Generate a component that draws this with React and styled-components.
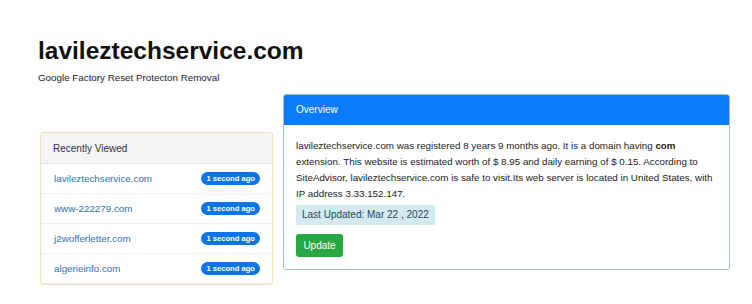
import React from "react";
import styled, { createGlobalStyle } from "styled-components";

const Global = createGlobalStyle`
  html, body { margin: 0; padding: 0; background: #fff; }
  body { font-family: "Liberation Sans", Arial, sans-serif; color: #212529; }
`;

const Page = styled.div`
  width: 752px;
  height: 304px;
  overflow: hidden;
  padding: 36px 0 0 38px;
  box-sizing: border-box;
`;

const Title = styled.h1`
  margin: 0;
  font-size: 24.5px;
  font-weight: 700;
  line-height: 30px;
  color: #111;
`;

const Subtitle = styled.p`
  margin: 5px 0 0;
  font-size: 9.8px;
  line-height: 14px;
  color: #222;
`;

const Columns = styled.div`
  display: flex;
  align-items: flex-start;
  gap: 10px;
  margin-top: 9px;
  padding-left: 2px;
`;

const Card = styled.div`
  background: #fff;
  border: 1px solid ${(p) => p.$border};
  border-radius: 3px;
  box-sizing: border-box;
  width: ${(p) => p.$w}px;
  margin-top: ${(p) => p.$top}px;
  overflow: hidden;
`;

const CardHeader = styled.div`
  height: ${(p) => p.$h}px;
  display: flex;
  align-items: center;
  padding: 0 12px;
  font-size: 10px;
  background: ${(p) => p.$bg};
  color: ${(p) => p.$color};
  border-bottom: 1px solid ${(p) => p.$line};
`;

const List = styled.ul`
  list-style: none;
  margin: 0;
  padding: 0;
`;

const Row = styled.li`
  height: 29px;
  display: flex;
  align-items: center;
  justify-content: space-between;
  padding: 0 12px 0 13px;
  border-bottom: 1px solid #eeeeee;
`;

const Link = styled.a`
  font-size: 9.8px;
  color: #2f72b0;
  text-decoration: none;
`;

const Pill = styled.span`
  background: #0b74e8;
  color: #fff;
  font-size: 7.6px;
  font-weight: 700;
  padding: 2px 5px;
  border-radius: 8px;
  line-height: 9px;
`;

const Body = styled.div`
  padding: 13px 12px 12px;
  font-size: 9.8px;
  line-height: 16px;
  color: #222;
`;

const Para = styled.p`
  margin: 0;
`;

const InfoTag = styled.div`
  display: inline-block;
  margin-top: 3px;
  background: #d4eaf0;
  color: #1e4a5a;
  font-size: 10px;
  line-height: 20px;
  padding: 0 6px;
  border-radius: 2px;
`;

const Button = styled.button`
  display: block;
  margin-top: 9px;
  background: #28a745;
  color: #fff;
  border: none;
  border-radius: 3px;
  font-family: inherit;
  font-size: 10px;
  height: 23px;
  width: 47px;
  padding: 0;
`;

const recent = [
  "lavileztechservice.com",
  "www-222279.com",
  "j2wofferletter.com",
  "algerieinfo.com",
];

export default function App() {
  return (
    <>
      <Global />
      <Page>
        <Title>lavileztechservice.com</Title>
        <Subtitle>Google Factory Reset Protecton Removal</Subtitle>
        <Columns>
          <Card $w={233} $top={38} $border="#f1e3b0">
            <CardHeader $h={30} $bg="#f5f5f5" $color="#333" $line="#e6e6e6">
              Recently Viewed
            </CardHeader>
            <List>
              {recent.map((r) => (
                <Row key={r}>
                  <Link href="#">{r}</Link>
                  <Pill>1 second ago</Pill>
                </Row>
              ))}
            </List>
          </Card>
          <Card $w={447} $top={0} $border="#a8bfc8">
            <CardHeader $h={29} $bg="#0a7bfb" $color="#fff" $line="#0a7bfb">
              Overview
            </CardHeader>
            <Body>
              <Para>
                lavileztechservice.com was registered 8 years 9 months ago. It is a
                domain having <b>com</b> extension. This website is estimated worth
                of $ 8.95 and daily earning of $ 0.15. According to SiteAdvisor,
                lavileztechservice.com is safe to visit.Its web server is located in
                United States, with IP address 3.33.152.147.
              </Para>
              <InfoTag>Last Updated: Mar 22 , 2022</InfoTag>
              <Button>Update</Button>
            </Body>
          </Card>
        </Columns>
      </Page>
    </>
  );
}
